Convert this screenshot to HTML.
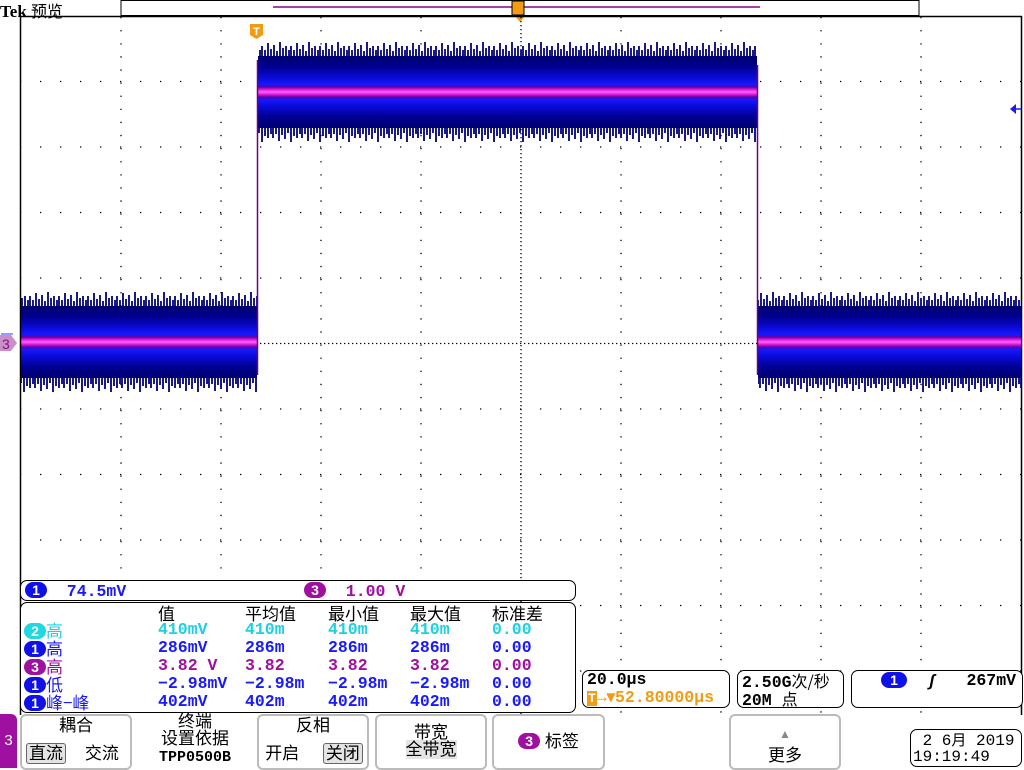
<!DOCTYPE html>
<html><head><meta charset="utf-8"><style>
*{margin:0;padding:0;box-sizing:border-box}
body{width:1024px;height:768px;background:#fff;position:relative;overflow:hidden;font-family:"Liberation Sans","Noto Sans CJK SC",sans-serif;color:#000}
.a{position:absolute;white-space:nowrap}
.m{font-family:"Liberation Mono","Noto Sans CJK SC",monospace;font-weight:bold;font-size:16.5px;line-height:18px}
.box{position:absolute;border:1.5px solid #000;border-radius:7px}
.btn{position:absolute;border:2px solid #bbb;border-radius:6px;text-align:center;font-size:17px;line-height:19px}
.bd{display:inline-block;border-radius:9px;color:#fff;font-weight:bold;width:22px;height:16px;line-height:16px;text-align:center;font-size:14px;font-family:"Liberation Sans",sans-serif;vertical-align:1px}
.b1{background:#1010e8}.b2{background:#20d8e0}.b3{background:#a010a0}
.c1{color:#1a1aff}.c2{color:#20d0e0}.c3{color:#a010a0}
.cj{font-weight:normal;font-family:'Noto Sans CJK SC',sans-serif;font-size:17px}
.sel{border:1.5px solid #666;background:#e4e4e4;border-radius:3px;padding:0 2px}
</style></head><body>
<svg class="a" style="left:0;top:0" width="1024" height="768">
<defs>
<linearGradient id="g" x1="0" y1="0" x2="0" y2="1">
<stop offset="0" stop-color="#000070"/><stop offset="0.15" stop-color="#000090"/>
<stop offset="0.3" stop-color="#0a0ad8"/><stop offset="0.4" stop-color="#1818ff"/>
<stop offset="0.43" stop-color="#6000a0"/><stop offset="0.46" stop-color="#d010d0"/>
<stop offset="0.5" stop-color="#ff60ff"/><stop offset="0.54" stop-color="#d010d0"/>
<stop offset="0.57" stop-color="#6000a0"/><stop offset="0.6" stop-color="#1818ff"/>
<stop offset="0.7" stop-color="#0a0ad8"/><stop offset="0.85" stop-color="#000090"/>
<stop offset="1" stop-color="#000070"/>
</linearGradient>
<pattern id="sp" x="0" y="0" width="29" height="40" patternUnits="userSpaceOnUse">
<g stroke="#000078" stroke-width="1.8">
<line x1="1" y1="40" x2="1" y2="30"/><line x1="4" y1="40" x2="4" y2="34"/><line x1="7" y1="40" x2="7" y2="27"/>
<line x1="10" y1="40" x2="10" y2="33"/><line x1="13" y1="40" x2="13" y2="29"/><line x1="16" y1="40" x2="16" y2="35"/>
<line x1="19" y1="40" x2="19" y2="26"/><line x1="22" y1="40" x2="22" y2="32"/><line x1="25" y1="40" x2="25" y2="30"/>
<line x1="28" y1="40" x2="28" y2="34"/>
</g>
</pattern>
</defs>
<rect x="121" y="0.5" width="798" height="15" fill="#fff" stroke="#000"/>
<line x1="273" y1="7" x2="760" y2="7" stroke="#8a008a" stroke-width="1.5"/>
<rect x="512" y="1" width="12" height="14" fill="#f39c12" stroke="#000"/>
<polygon points="515,16 525,16 520,22" fill="#f39c12"/>
<line x1="20" y1="16.5" x2="1022" y2="16.5" stroke="#000" stroke-width="1.5"/>
<line x1="1021.5" y1="16" x2="1021.5" y2="715" stroke="#000" stroke-width="1.5"/>
<g stroke="#000" stroke-width="1.3" stroke-dasharray="1.3 11.8">
<line x1="121" y1="17" x2="121" y2="715"/><line x1="221" y1="17" x2="221" y2="715"/><line x1="321" y1="17" x2="321" y2="715"/><line x1="421" y1="17" x2="421" y2="715"/><line x1="621" y1="17" x2="621" y2="715"/><line x1="721" y1="17" x2="721" y2="715"/><line x1="821" y1="17" x2="821" y2="715"/><line x1="921" y1="17" x2="921" y2="715"/>
</g>
<g stroke="#000" stroke-width="1.3" stroke-dasharray="1.3 18.7">
<line x1="20" y1="81.5" x2="1022" y2="81.5"/><line x1="20" y1="147" x2="1022" y2="147"/><line x1="20" y1="212.5" x2="1022" y2="212.5"/><line x1="20" y1="278" x2="1022" y2="278"/><line x1="20" y1="409" x2="1022" y2="409"/><line x1="20" y1="474.5" x2="1022" y2="474.5"/><line x1="20" y1="540" x2="1022" y2="540"/><line x1="20" y1="605.5" x2="1022" y2="605.5"/><line x1="20" y1="671" x2="1022" y2="671"/>
</g>
<g stroke="#000" stroke-width="1.3" stroke-dasharray="1.3 2.7">
<line x1="20" y1="343.5" x2="1022" y2="343.5"/><line x1="521" y1="17" x2="521" y2="715"/>
</g>
<rect x="21" y="306" width="236" height="72" fill="url(#g)"/>
<rect x="758" y="306" width="263" height="72" fill="url(#g)"/>
<rect x="258" y="56" width="499" height="72" fill="url(#g)"/>
<g transform="translate(0,266)"><rect x="21" y="0" width="236" height="40" fill="url(#sp)"/></g>
<g transform="translate(0,266)"><rect x="758" y="0" width="263" height="40" fill="url(#sp)"/></g>
<g transform="translate(0,16)"><rect x="258" y="0" width="499" height="40" fill="url(#sp)"/></g>
<g transform="translate(5,418) scale(1,-1)"><rect x="16" y="0" width="236" height="40" fill="url(#sp)"/></g>
<g transform="translate(5,418) scale(1,-1)"><rect x="753" y="0" width="263" height="40" fill="url(#sp)"/></g>
<g transform="translate(11,168) scale(1,-1)"><rect x="247" y="0" width="499" height="40" fill="url(#sp)"/></g>
<rect x="0" y="17" width="20" height="698" fill="#fff"/>
<line x1="257.5" y1="60" x2="257.5" y2="375" stroke="#70007a" stroke-width="1.5"/>
<line x1="757.5" y1="65" x2="757.5" y2="375" stroke="#70007a" stroke-width="1.5"/>
<line x1="20.5" y1="16" x2="20.5" y2="715" stroke="#000" stroke-width="1.5"/>
<path d="M250,24 h13 v11 l-6.5,4 l-6.5,-4z" fill="#f39c12"/>
<text x="256.5" y="35" font-size="11" font-weight="bold" fill="#fff" text-anchor="middle" font-family="Liberation Sans">T</text>
<polygon points="1010,109 1016,104 1016,114" fill="#1a1aff"/><line x1="1015" y1="109" x2="1021" y2="109" stroke="#1a1aff" stroke-width="1.5"/>
<path d="M0,335 h11 l6,8 l-6,8 h-11z" fill="#c890c8"/>
<line x1="1" y1="334" x2="13" y2="334" stroke="#3030ff"/>
<text x="2" y="349" font-size="14" fill="#8a108a" font-family="Liberation Sans">3</text>
</svg>
<div class="a" style="left:0;top:-2px;font-size:17px;font-weight:bold;font-family:'Liberation Serif',serif">Tek <span style="font-weight:normal;font-family:'Noto Sans CJK SC',sans-serif;font-size:16px">预览</span></div>

<div class="box" style="left:20px;top:580px;width:556px;height:21px;background:#fff"></div>
<div class="a m" style="left:25px;top:582px"><span class="bd b1">1</span> <span class="c1">&nbsp;74.5mV</span></div>
<div class="a m" style="left:304px;top:582px"><span class="bd b3">3</span> <span class="c3">&nbsp;1.00 V</span></div>

<div class="box" style="left:20px;top:602px;width:556px;height:111px;background:#fff"></div>
<div class="a cj" style="left:158px;top:600px">值</div>
<div class="a cj" style="left:245px;top:600px">平均值</div>
<div class="a cj" style="left:328px;top:600px">最小值</div>
<div class="a cj" style="left:410px;top:600px">最大值</div>
<div class="a cj" style="left:492px;top:600px">标准差</div>

<div class="a m c2" style="left:24px;top:621px"><span class="bd b2">2</span><span class="cj">高</span></div>
<div class="a m c2" style="left:158px;top:621px">410mV</div><div class="a m c2" style="left:245px;top:621px">410m</div><div class="a m c2" style="left:328px;top:621px">410m</div><div class="a m c2" style="left:410px;top:621px">410m</div><div class="a m c2" style="left:492px;top:621px">0.00</div>

<div class="a m c1" style="left:24px;top:639px"><span class="bd b1">1</span><span class="cj">高</span></div>
<div class="a m c1" style="left:158px;top:639px">286mV</div><div class="a m c1" style="left:245px;top:639px">286m</div><div class="a m c1" style="left:328px;top:639px">286m</div><div class="a m c1" style="left:410px;top:639px">286m</div><div class="a m c1" style="left:492px;top:639px">0.00</div>

<div class="a m c3" style="left:24px;top:657px"><span class="bd b3">3</span><span class="cj">高</span></div>
<div class="a m c3" style="left:158px;top:657px">3.82 V</div><div class="a m c3" style="left:245px;top:657px">3.82</div><div class="a m c3" style="left:328px;top:657px">3.82</div><div class="a m c3" style="left:410px;top:657px">3.82</div><div class="a m c3" style="left:492px;top:657px">0.00</div>

<div class="a m c1" style="left:24px;top:675px"><span class="bd b1">1</span><span class="cj">低</span></div>
<div class="a m c1" style="left:158px;top:675px">−2.98mV</div><div class="a m c1" style="left:245px;top:675px">−2.98m</div><div class="a m c1" style="left:328px;top:675px">−2.98m</div><div class="a m c1" style="left:410px;top:675px">−2.98m</div><div class="a m c1" style="left:492px;top:675px">0.00</div>

<div class="a m c1" style="left:24px;top:693px"><span class="bd b1">1</span><span class="cj">峰−峰</span></div>
<div class="a m c1" style="left:158px;top:693px">402mV</div><div class="a m c1" style="left:245px;top:693px">402m</div><div class="a m c1" style="left:328px;top:693px">402m</div><div class="a m c1" style="left:410px;top:693px">402m</div><div class="a m c1" style="left:492px;top:693px">0.00</div>

<div class="box" style="left:582px;top:670px;width:148px;height:38px;background:#fff"></div>
<div class="a m" style="left:587px;top:671px">20.0µs</div>
<div class="a m" style="left:587px;top:689px;color:#f39c12"><span style="background:#f39c12;color:#fff;font-size:13px;padding:0 1px">T</span>→▾52.80000µs</div>
<div class="box" style="left:737px;top:670px;width:107px;height:38px;background:#fff"></div>
<div class="a m" style="left:742px;top:671px">2.50G<span class="cj" style="font-size:16px">次/秒</span></div>
<div class="a m" style="left:742px;top:689px">20M <span class="cj" style="font-size:16px">点</span></div>
<div class="box" style="left:851px;top:670px;width:172px;height:38px;background:#fff"></div>
<div class="a m" style="left:881px;top:672px;width:137px"><span class="bd b1" style="width:26px">1</span>&nbsp;&nbsp;<i>ʃ</i><span style="position:absolute;right:2px">267mV</span></div>

<div class="a" style="left:0;top:714px;width:17px;height:54px;background:#a010a0;border-radius:0 6px 0 0;color:#fff;font-size:15px;line-height:54px;text-align:center">3</div>
<div class="btn" style="left:20px;top:714px;width:112px;height:56px">耦合<div style="margin-top:9px;text-align:left;padding-left:4px"><span class="sel">直流</span>&nbsp;&nbsp;&nbsp; 交流</div></div>
<div class="a" style="left:143px;top:713px;width:104px;text-align:center;font-size:17px;line-height:17px">终端<br>设置依据<br><span class="m" style="font-size:15px">TPP0500B</span></div>
<div class="btn" style="left:257px;top:714px;width:112px;height:56px">反相<div style="margin-top:9px;padding-left:2px">开启&nbsp;&nbsp;&nbsp;&nbsp; <span class="sel">关闭</span></div></div>
<div class="btn" style="left:375px;top:714px;width:112px;height:56px;line-height:17px;padding-top:8px">带宽<br><span style="background:#e4e4e4">全带宽</span></div>
<div class="btn" style="left:492px;top:714px;width:113px;height:56px;line-height:52px"><span class="bd b3">3</span> 标签</div>
<div class="btn" style="left:729px;top:714px;width:112px;height:56px;padding-top:6px;line-height:22px"><span style="font-size:12px;color:#888">▲</span><br>更多</div>
<div class="box" style="left:910px;top:729px;width:112px;height:38px"></div>
<div class="a m" style="left:913px;top:732px;font-weight:normal;font-size:16px;line-height:16px">&nbsp;2 6<span class="cj" style="font-size:15px">月</span> 2019<br>19:19:49</div>
</body></html>
